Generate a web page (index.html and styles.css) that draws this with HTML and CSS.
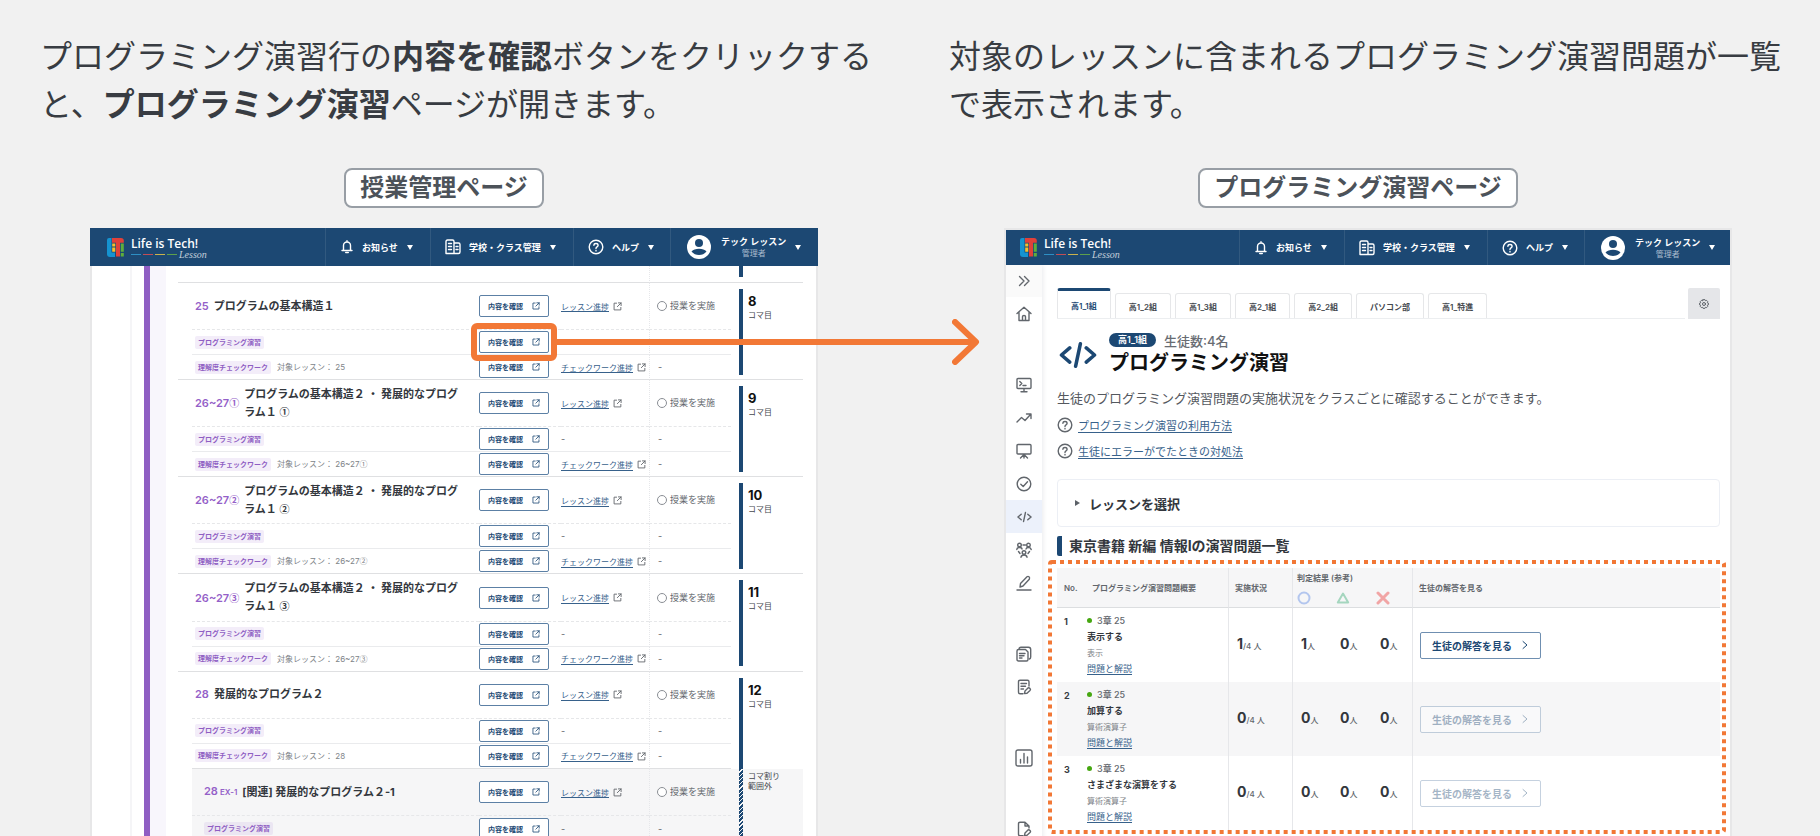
FILE: index.html
```html
<!DOCTYPE html>
<html lang="ja">

<head>
    <meta charset="UTF-8">
    <meta name="viewport" content="width=device-width, initial-scale=1.0">
    <title>プログラミング演習ページの開き方</title>
    <link rel="stylesheet" href="styles.css">
</head>

<body>
    <!-- アイコン定義 -->
    <svg class="defs" aria-hidden="true">
        <symbol id="i-logo" viewBox="0 0 17 19">
            <path d="M2 0H4.500V14.500H8V19H3Q0 19 0 16V2Q0 0 2 0Z" fill="#1593d0" />
            <path d="M5 0H14Q16.800 0 16.800 2.500V4.800H13V18.500H9V4.800H5Z" fill="#e0413a" />
            <path d="M5.200 5.500H8.300V8.500H5.200ZM5.200 9.500H8.300V13.800H5.200Z" fill="#f5c02c" />
            <path d="M13.800 5.500H16.800V13.800H13.800ZM13.800 15H16.800V18.500H13.800Z" fill="#5fae3b" />
        </symbol>
        <symbol id="i-bell" viewBox="0 0 12 14">
            <path d="M2.500 10V5.500a3.500 3.500 0 0 1 7 0V10M1 10.500H11M6 0.800V2" />
            <path d="M4.800 12.500H7.200" stroke-width="1.600" />
        </symbol>
        <symbol id="i-school" viewBox="0 0 16 16">
            <path d="M1 14.500V2.500Q1 1 2.500 1H7.500Q9 1 9 2.500V14.500ZM9 4H13.500Q15 4 15 5.500V13Q15 14.500 13.500 14.500H9M3.500 4.500H6.500M3.500 7.500H6.500M3.500 10.500H6.500M11 7.500H13M11 10.500H13" />
        </symbol>
        <symbol id="i-help" viewBox="0 0 16 16">
            <circle cx="8" cy="8" r="6.800" />
            <path d="M5.900 6.300Q6 4.500 8 4.500T10.100 6.300Q10.100 7.200 9 7.900Q8 8.500 8 9.500M8 11.500V11.900" />
        </symbol>
        <symbol id="i-user" viewBox="0 0 24 24">
            <circle cx="12" cy="12" r="12" fill="#fff" />
            <circle cx="12" cy="8" r="4" fill="#1c4873" />
            <path d="M4.500 16.500Q7 13.800 12 13.800T19.500 16.500Q16.500 20 12 20T4.500 16.500Z" fill="#1c4873" />
        </symbol>
        <symbol id="i-ext" viewBox="0 0 10 10">
            <path d="M4 1.300H1.200V8.800H8.700V6M6 1H9V4M9 1L4.800 5.200" />
        </symbol>
        <symbol id="i-toggle" viewBox="0 0 16 16">
            <path d="M3.500 3.500L8 8L3.500 12.500M8.500 3.500L13 8L8.500 12.500" />
        </symbol>
        <symbol id="i-home" viewBox="0 0 16 16">
            <path d="M1 7.500L8 1.300L15 7.500M3 6V14.500H13V6M6.500 14.500V10.500Q6.500 9.500 8 9.500T9.500 10.500V14.500" />
        </symbol>
        <symbol id="i-console" viewBox="0 0 16 16">
            <path d="M2 1.500H14Q15 1.500 15 2.500V10.500Q15 11.500 14 11.500H2Q1 11.500 1 10.500V2.500Q1 1.500 2 1.500ZM8 11.500V14.500M5 14.700H11M3.800 4.500L5.800 6.500L3.800 8.500M7 8.500H10" />
        </symbol>
        <symbol id="i-trend" viewBox="0 0 16 16">
            <path d="M1 12L5.500 7.500L9 10.500L14.500 4.500M10.500 4H15V8.500" />
        </symbol>
        <symbol id="i-board" viewBox="0 0 16 16">
            <path d="M2 1.500H14Q15 1.500 15 2.500V10Q15 11 14 11H2Q1 11 1 10V2.500Q1 1.500 2 1.500ZM8 11V15M8 11.500L4.500 15M8 11.500L11.500 15" />
        </symbol>
        <symbol id="i-check" viewBox="0 0 16 16">
            <circle cx="8" cy="8" r="6.800" />
            <path d="M4.800 8.200L7.200 10.500L11.500 5.800" />
        </symbol>
        <symbol id="i-code" viewBox="0 0 32 22">
            <path d="M9 5L2 11L9 17M23 5L30 11L23 17M18 1.500L14 20.500" />
        </symbol>
        <symbol id="i-people" viewBox="0 0 16 16">
            <circle cx="3.500" cy="3" r="1.800" />
            <circle cx="12.500" cy="3" r="1.800" />
            <circle cx="8" cy="10.500" r="1.800" />
            <path d="M0.800 7.500Q1 5.500 3.500 5.500T6 7M10 7Q10.200 5.500 12.500 5.500T15.200 7.500M5 15.200Q5.300 13 8 13T11 15.200M7 3H9.500M2.500 9.500L4 11.500M13.500 9.500L12 11.500" />
        </symbol>
        <symbol id="i-pen" viewBox="0 0 16 16">
            <path d="M1 15H15M4 12L4.500 8.500L11 1.800Q12 1 13 1.800T13.300 4.200L7 11Z" />
        </symbol>
        <symbol id="i-copy" viewBox="0 0 16 16">
            <path d="M2.500 3.500H9.500L12 6V13.500Q12 15 10.500 15H2.500Q1 15 1 13.500V5Q1 3.500 2.500 3.500ZM3 3Q3 1.200 5 1.200H12.500Q14.700 1.200 14.700 3.500V11Q14.700 12.500 13.500 13M3.500 7.500H9M3.500 9.800H8M3.500 12H6" />
        </symbol>
        <symbol id="i-note" viewBox="0 0 16 16">
            <path d="M7 14.800H4Q2.500 14.800 2.500 13.300V2.700Q2.500 1.200 4 1.200H11.500Q13 1.200 13 2.700V7M5 4.500H10.500M5 7.300H9.500M5 10H7.500M8.500 14.500L9 12L12 9Q13 8.500 14 9.500T14 11.500L11 14.300Z" />
        </symbol>
        <symbol id="i-file" viewBox="0 0 16 16">
            <path d="M7 14.800H4Q2.500 14.800 2.500 13.300V2.700Q2.500 1.200 4 1.200H9L13 5V7M9 1.200V5H13M8.500 14.500L9 12L12 9Q13 8.500 14 9.500T14 11.500L11 14.300Z" />
        </symbol>
        <symbol id="i-chart" viewBox="0 0 18 18">
            <path d="M3 1H15Q17 1 17 3V15Q17 17 15 17H3Q1 17 1 15V3Q1 1 3 1ZM5.500 10.500V14M9 4.500V14M12.500 8V14" />
        </symbol>
        <symbol id="i-gear" viewBox="0 0 10 10">
            <circle cx="5" cy="5" r="1.500" />
            <path d="M4 0.700H6L6.500 1.700L7.600 1.400L8.700 2.500L8.300 3.600L9.300 4V6L8.300 6.400L8.700 7.500L7.600 8.600L6.500 8.300L6 9.300H4L3.500 8.300L2.400 8.600L1.300 7.500L1.700 6.400L0.700 6V4L1.700 3.600L1.300 2.500L2.400 1.400L3.500 1.700Z" />
        </symbol>
        <symbol id="i-next" viewBox="0 0 8 10">
            <path d="M2 1.500L6 5L2 8.500" />
        </symbol>
    </svg>

    <main class="slide">
        <section class="step">
            <p class="lead">プログラミング演習行の<strong>内容を確認</strong>ボタンをクリックすると、<strong>プログラミング演習</strong>ページが開きます。</p>
            <div class="shot shot-left">
                <h2 class="caption"><span>授業管理ページ</span></h2>
                <div class="window window-lessons">
                    <header class="topbar">
                        <div class="brand">
                            <svg class="brand-mark"><use href="#i-logo" /></svg>
                            <div class="brand-text">
                                <span class="brand-name">Life is Tech!</span>
                                <span class="brand-sub"><i class="b1"></i><i class="b2"></i><i class="b3"></i><i class="b4"></i><em>Lesson</em></span>
                            </div>
                        </div>
                        <a class="nav nav-news" href="#"><svg class="icon bell"><use href="#i-bell" /></svg>お知らせ<b class="caret"></b></a>
                        <a class="nav nav-school" href="#"><svg class="icon"><use href="#i-school" /></svg>学校・クラス管理<b class="caret"></b></a>
                        <a class="nav nav-help" href="#"><svg class="icon"><use href="#i-help" /></svg>ヘルプ<b class="caret"></b></a>
                        <a class="nav nav-user" href="#"><svg class="avatar"><use href="#i-user" /></svg><span class="user">テック レッスン<small>管理者</small></span><b class="caret"></b></a>
                    </header>
                    <div class="lessons">
                        <div class="gutter"></div>
                        <div class="unit-bar"></div>
                        <table class="lesson-table">
                            <colgroup>
                                <col class="c-pad">
                                <col>
                                <col class="c-btn">
                                <col class="c-link">
                                <col class="c-status">
                                <col class="c-period">
                            </colgroup>
                            <tbody class="prev">
                                <tr>
                                    <td class="pad"></td>
                                    <td></td>
                                    <td></td>
                                    <td></td>
                                    <td class="status"></td>
                                    <td class="period"><div class="slot"></div></td>
                                </tr>
                            </tbody>
                            <tbody>
                                <tr class="main">
                                    <td class="pad" rowspan="3"></td>
                                    <td><div class="title"><b>25</b><span>プログラムの基本構造１</span></div></td>
                                    <td><button class="confirm">内容を確認<svg><use href="#i-ext" /></svg></button></td>
                                    <td><a class="progress" href="#">レッスン進捗</a><svg class="ext"><use href="#i-ext" /></svg></td>
                                    <td class="status"><label><input type="radio" name="l25">授業を実施</label></td>
                                    <td class="period" rowspan="3"><div class="slot"><b>8</b>コマ目</div></td>
                                </tr>
                                <tr>
                                    <td><span class="tag">プログラミング演習</span></td>
                                    <td><div class="focus"><button class="confirm">内容を確認<svg><use href="#i-ext" /></svg></button></div></td>
                                    <td></td>
                                    <td class="status"></td>
                                </tr>
                                <tr>
                                    <td><span class="tag">理解度チェックワーク</span><span class="target">対象レッスン： 25</span></td>
                                    <td><button class="confirm">内容を確認<svg><use href="#i-ext" /></svg></button></td>
                                    <td><a class="progress" href="#">チェックワーク進捗</a><svg class="ext"><use href="#i-ext" /></svg></td>
                                    <td class="status">-</td>
                                </tr>
                            </tbody>
                            <tbody>
                                <tr class="main">
                                    <td class="pad" rowspan="3"></td>
                                    <td><div class="title"><b>26~27<i class="circled">①</i></b><span>プログラムの基本構造２ ・ 発展的なプログラム１ <i class="circled">①</i></span></div></td>
                                    <td><button class="confirm">内容を確認<svg><use href="#i-ext" /></svg></button></td>
                                    <td><a class="progress" href="#">レッスン進捗</a><svg class="ext"><use href="#i-ext" /></svg></td>
                                    <td class="status"><label><input type="radio" name="l26a">授業を実施</label></td>
                                    <td class="period" rowspan="3"><div class="slot"><b>9</b>コマ目</div></td>
                                </tr>
                                <tr>
                                    <td><span class="tag">プログラミング演習</span></td>
                                    <td><button class="confirm">内容を確認<svg><use href="#i-ext" /></svg></button></td>
                                    <td>-</td>
                                    <td class="status">-</td>
                                </tr>
                                <tr>
                                    <td><span class="tag">理解度チェックワーク</span><span class="target">対象レッスン： 26~27<i class="circled">①</i></span></td>
                                    <td><button class="confirm">内容を確認<svg><use href="#i-ext" /></svg></button></td>
                                    <td><a class="progress" href="#">チェックワーク進捗</a><svg class="ext"><use href="#i-ext" /></svg></td>
                                    <td class="status">-</td>
                                </tr>
                            </tbody>
                            <tbody>
                                <tr class="main">
                                    <td class="pad" rowspan="3"></td>
                                    <td><div class="title"><b>26~27<i class="circled">②</i></b><span>プログラムの基本構造２ ・ 発展的なプログラム１ <i class="circled">②</i></span></div></td>
                                    <td><button class="confirm">内容を確認<svg><use href="#i-ext" /></svg></button></td>
                                    <td><a class="progress" href="#">レッスン進捗</a><svg class="ext"><use href="#i-ext" /></svg></td>
                                    <td class="status"><label><input type="radio" name="l26b">授業を実施</label></td>
                                    <td class="period" rowspan="3"><div class="slot"><b>10</b>コマ目</div></td>
                                </tr>
                                <tr>
                                    <td><span class="tag">プログラミング演習</span></td>
                                    <td><button class="confirm">内容を確認<svg><use href="#i-ext" /></svg></button></td>
                                    <td>-</td>
                                    <td class="status">-</td>
                                </tr>
                                <tr>
                                    <td><span class="tag">理解度チェックワーク</span><span class="target">対象レッスン： 26~27<i class="circled">②</i></span></td>
                                    <td><button class="confirm">内容を確認<svg><use href="#i-ext" /></svg></button></td>
                                    <td><a class="progress" href="#">チェックワーク進捗</a><svg class="ext"><use href="#i-ext" /></svg></td>
                                    <td class="status">-</td>
                                </tr>
                            </tbody>
                            <tbody>
                                <tr class="main">
                                    <td class="pad" rowspan="3"></td>
                                    <td><div class="title"><b>26~27<i class="circled">③</i></b><span>プログラムの基本構造２ ・ 発展的なプログラム１ <i class="circled">③</i></span></div></td>
                                    <td><button class="confirm">内容を確認<svg><use href="#i-ext" /></svg></button></td>
                                    <td><a class="progress" href="#">レッスン進捗</a><svg class="ext"><use href="#i-ext" /></svg></td>
                                    <td class="status"><label><input type="radio" name="l26c">授業を実施</label></td>
                                    <td class="period" rowspan="3"><div class="slot"><b>11</b>コマ目</div></td>
                                </tr>
                                <tr>
                                    <td><span class="tag">プログラミング演習</span></td>
                                    <td><button class="confirm">内容を確認<svg><use href="#i-ext" /></svg></button></td>
                                    <td>-</td>
                                    <td class="status">-</td>
                                </tr>
                                <tr>
                                    <td><span class="tag">理解度チェックワーク</span><span class="target">対象レッスン： 26~27<i class="circled">③</i></span></td>
                                    <td><button class="confirm">内容を確認<svg><use href="#i-ext" /></svg></button></td>
                                    <td><a class="progress" href="#">チェックワーク進捗</a><svg class="ext"><use href="#i-ext" /></svg></td>
                                    <td class="status">-</td>
                                </tr>
                            </tbody>
                            <tbody class="before-extra">
                                <tr class="main">
                                    <td class="pad" rowspan="3"></td>
                                    <td><div class="title"><b>28</b><span>発展的なプログラム２</span></div></td>
                                    <td><button class="confirm">内容を確認<svg><use href="#i-ext" /></svg></button></td>
                                    <td><a class="progress" href="#">レッスン進捗</a><svg class="ext"><use href="#i-ext" /></svg></td>
                                    <td class="status"><label><input type="radio" name="l28">授業を実施</label></td>
                                    <td class="period" rowspan="3"><div class="slot"><b>12</b>コマ目</div></td>
                                </tr>
                                <tr>
                                    <td><span class="tag">プログラミング演習</span></td>
                                    <td><button class="confirm">内容を確認<svg><use href="#i-ext" /></svg></button></td>
                                    <td>-</td>
                                    <td class="status">-</td>
                                </tr>
                                <tr>
                                    <td><span class="tag">理解度チェックワーク</span><span class="target">対象レッスン： 28</span></td>
                                    <td><button class="confirm">内容を確認<svg><use href="#i-ext" /></svg></button></td>
                                    <td><a class="progress" href="#">チェックワーク進捗</a><svg class="ext"><use href="#i-ext" /></svg></td>
                                    <td class="status">-</td>
                                </tr>
                            </tbody>
                            <tbody class="extra">
                                <tr class="main">
                                    <td class="pad" rowspan="2"></td>
                                    <td><div class="title"><b>28<small>EX-1</small></b><span>[関連] 発展的なプログラム２-1</span></div></td>
                                    <td><button class="confirm">内容を確認<svg><use href="#i-ext" /></svg></button></td>
                                    <td><a class="progress" href="#">レッスン進捗</a><svg class="ext"><use href="#i-ext" /></svg></td>
                                    <td class="status"><label><input type="radio" name="l28x">授業を実施</label></td>
                                    <td class="period" rowspan="2"><div class="slot">コマ割り<br>範囲外</div></td>
                                </tr>
                                <tr>
                                    <td><span class="tag">プログラミング演習</span></td>
                                    <td><button class="confirm">内容を確認<svg><use href="#i-ext" /></svg></button></td>
                                    <td>-</td>
                                    <td class="status">-</td>
                                </tr>
                            </tbody>
                        </table>
                    </div>
                </div>
            </div>
        </section>

        <section class="step">
            <p class="lead">対象のレッスンに含まれるプログラミング演習問題が一覧で表示されます。</p>
            <div class="shot shot-right">
                <h2 class="caption"><span>プログラミング演習ページ</span></h2>
                <div class="window window-practice">
                    <header class="topbar">
                        <div class="brand">
                            <svg class="brand-mark"><use href="#i-logo" /></svg>
                            <div class="brand-text">
                                <span class="brand-name">Life is Tech!</span>
                                <span class="brand-sub"><i class="b1"></i><i class="b2"></i><i class="b3"></i><i class="b4"></i><em>Lesson</em></span>
                            </div>
                        </div>
                        <a class="nav nav-news" href="#"><svg class="icon bell"><use href="#i-bell" /></svg>お知らせ<b class="caret"></b></a>
                        <a class="nav nav-school" href="#"><svg class="icon"><use href="#i-school" /></svg>学校・クラス管理<b class="caret"></b></a>
                        <a class="nav nav-help" href="#"><svg class="icon"><use href="#i-help" /></svg>ヘルプ<b class="caret"></b></a>
                        <a class="nav nav-user" href="#"><svg class="avatar"><use href="#i-user" /></svg><span class="user">テック レッスン<small>管理者</small></span><b class="caret"></b></a>
                    </header>
                    <div class="practice">
                        <nav class="side">
                            <button class="toggle" aria-label="メニューを開く"><svg><use href="#i-toggle" /></svg></button>
                            <a href="#" aria-label="ホーム"><svg><use href="#i-home" /></svg></a>
                            <a href="#" class="gap" aria-label="教材"><svg><use href="#i-console" /></svg></a>
                            <a href="#" aria-label="進捗"><svg><use href="#i-trend" /></svg></a>
                            <a href="#" aria-label="授業"><svg><use href="#i-board" /></svg></a>
                            <a href="#" aria-label="チェックワーク"><svg><use href="#i-check" /></svg></a>
                            <a href="#" class="active" aria-label="プログラミング演習"><svg><use href="#i-code" /></svg></a>
                            <a href="#" aria-label="グループ"><svg><use href="#i-people" /></svg></a>
                            <a href="#" aria-label="作品"><svg><use href="#i-pen" /></svg></a>
                            <a href="#" class="gap" aria-label="資料"><svg><use href="#i-copy" /></svg></a>
                            <a href="#" aria-label="テスト"><svg><use href="#i-note" /></svg></a>
                            <a href="#" class="gap" aria-label="分析"><svg class="large"><use href="#i-chart" /></svg></a>
                            <a href="#" class="gap" aria-label="ファイル"><svg><use href="#i-file" /></svg></a>
                        </nav>
                        <div class="content">
                            <div class="tabs">
                                <div class="tab-list">
                                    <button class="tab current">高1_1組</button>
                                    <button class="tab">高1_2組</button>
                                    <button class="tab">高1_3組</button>
                                    <button class="tab">高2_1組</button>
                                    <button class="tab">高2_2組</button>
                                    <button class="tab">パソコン部</button>
                                    <button class="tab">高1_特進</button>
                                </div>
                                <button class="settings" aria-label="設定"><svg><use href="#i-gear" /></svg></button>
                            </div>
                            <div class="page-head">
                                <svg class="page-icon"><use href="#i-code" /></svg>
                                <div>
                                    <div class="class-info"><span class="pill">高1_1組</span>生徒数:4名</div>
                                    <h1>プログラミング演習</h1>
                                </div>
                            </div>
                            <p class="desc">生徒のプログラミング演習問題の実施状況をクラスごとに確認することができます。</p>
                            <ul class="help-links">
                                <li><svg><use href="#i-help" /></svg><a href="#">プログラミング演習の利用方法</a></li>
                                <li><svg><use href="#i-help" /></svg><a href="#">生徒にエラーがでたときの対処法</a></li>
                            </ul>
                            <details class="picker">
                                <summary>レッスンを選択</summary>
                            </details>
                            <h2 class="list-title">東京書籍 新編 情報Iの演習問題一覧</h2>
                            <div class="result">
                                <svg class="result-frame"><rect /></svg>
                                <table class="result-table">
                                    <colgroup>
                                        <col class="r-no">
                                        <col class="r-name">
                                        <col class="r-state">
                                        <col class="r-mark">
                                        <col class="r-mark">
                                        <col class="r-mark">
                                        <col>
                                    </colgroup>
                                    <thead>
                                        <tr>
                                            <th rowspan="2" class="no">No.</th>
                                            <th rowspan="2" class="name">プログラミング演習問題概要</th>
                                            <th rowspan="2" class="line">実施状況</th>
                                            <th colspan="3" class="line judge">判定結果 (参考)</th>
                                            <th rowspan="2" class="line answer">生徒の解答を見る</th>
                                        </tr>
                                        <tr>
                                            <th class="line mark"><svg viewBox="0 0 14 14"><circle cx="7" cy="7" r="5.500" stroke="#b3c6ee" stroke-width="2" /></svg></th>
                                            <th class="mark"><svg viewBox="0 0 14 14"><path d="M7 2.500L12.200 11.500H1.800Z" stroke="#a5d6bf" stroke-width="2" /></svg></th>
                                            <th class="mark"><svg viewBox="0 0 14 14"><path d="M2 2L12 12M12 2L2 12" stroke="#f1a5a5" stroke-width="3" /></svg></th>
                                        </tr>
                                    </thead>
                                    <tbody>
                                        <tr>
                                            <td class="no">1</td>
                                            <td class="name">
                                                <span class="chapter">3章 25</span>
                                                <b>表示する</b>
                                                <small>表示</small>
                                                <a href="#">問題と解説</a>
                                            </td>
                                            <td class="line count"><b>1</b>/4 人</td>
                                            <td class="line count"><b>1</b>人</td>
                                            <td class="count"><b>0</b>人</td>
                                            <td class="count"><b>0</b>人</td>
                                            <td class="line answer"><button>生徒の解答を見る<svg><use href="#i-next" /></svg></button></td>
                                        </tr>
                                        <tr>
                                            <td class="no">2</td>
                                            <td class="name">
                                                <span class="chapter">3章 25</span>
                                                <b>加算する</b>
                                                <small>算術演算子</small>
                                                <a href="#">問題と解説</a>
                                            </td>
                                            <td class="line count"><b>0</b>/4 人</td>
                                            <td class="line count"><b>0</b>人</td>
                                            <td class="count"><b>0</b>人</td>
                                            <td class="count"><b>0</b>人</td>
                                            <td class="line answer"><button disabled>生徒の解答を見る<svg><use href="#i-next" /></svg></button></td>
                                        </tr>
                                        <tr>
                                            <td class="no">3</td>
                                            <td class="name">
                                                <span class="chapter">3章 25</span>
                                                <b>さまざまな演算をする</b>
                                                <small>算術演算子</small>
                                                <a href="#">問題と解説</a>
                                            </td>
                                            <td class="line count"><b>0</b>/4 人</td>
                                            <td class="line count"><b>0</b>人</td>
                                            <td class="count"><b>0</b>人</td>
                                            <td class="count"><b>0</b>人</td>
                                            <td class="line answer"><button disabled>生徒の解答を見る<svg><use href="#i-next" /></svg></button></td>
                                        </tr>
                                    </tbody>
                                </table>
                            </div>
                        </div>
                    </div>
                </div>
            </div>
        </section>

        <!-- 左の画面から右の画面への矢印 -->
        <div class="arrow"><svg viewBox="0 0 28 46"><path d="M3 3L24 23L3 43" /></svg></div>
    </main>
</body>

</html>
```

FILE: styles.css
```css
*,
*::before,
*::after {
    box-sizing: border-box;
}

body {
    margin: 0;
    background: #f1f1f1;
    color: #383c42;
    font-family: Inter, "Noto Sans CJK JP", sans-serif;
}

h1,
h2,
p,
ul {
    margin: 0;
    padding: 0;
}

button {
    font-family: inherit;
    background: #fff;
    border: none;
    padding: 0;
}

svg {
    flex: none;
    fill: none;
    stroke: currentColor;
    stroke-linecap: round;
    stroke-linejoin: round;
}

.defs {
    display: none;
}

/* 全体 */
.slide {
    position: relative;
    display: grid;
    grid-template-columns: 1fr 1fr;
    column-gap: 76px;
    height: 100vh;
    padding: 30px 38px 0 40px;
    overflow: hidden;
}

.lead {
    font-family: "Noto Sans CJK JP", sans-serif;
    font-size: 32px;
    line-height: 48px;
}

.shot-left {
    padding: 0 55px 0 50px;
}

.shot-right {
    padding: 0 50px 0 55px;
}

.caption {
    display: flex;
    justify-content: center;
    margin: 42px 20px 20px 0;
}

.caption span {
    height: 40px;
    padding: 0 14px;
    border: 2px solid #989ea5;
    border-radius: 8px;
    background: #fff;
    color: #4c5259;
    font-size: 24px;
    line-height: 36px;
}

.window {
    background: #fff;
}

.window-practice {
    border: 2px solid #e7e7e8;
}

/* ヘッダー */
.topbar {
    display: flex;
    height: 38px;
    background: #1c4873;
    color: #fff;
}

.window-practice .topbar {
    height: 35px;
}

.brand {
    flex: 1;
    display: flex;
    align-items: center;
    gap: 7px;
    padding-left: 17px;
}

.window-practice .brand {
    padding-left: 14px;
}

.brand-mark {
    width: 17px;
    height: 19px;
    stroke: none;
}

.brand-text {
    display: flex;
    flex-direction: column;
}

.brand-name {
    font-family: "Open Sans", sans-serif;
    font-size: 12px;
    font-weight: 600;
    line-height: 14px;
}

.brand-sub {
    display: flex;
    align-items: center;
    gap: 2px;
    height: 7px;
}

.brand-sub i {
    width: 10px;
    height: 1px;
}

.b1 { background: #2d8fc4; }
.b2 { background: #c34d55; }
.b3 { background: #c9b24c; }
.b4 { background: #5da04c; }

.brand-sub em {
    font: italic 10px/7px "Liberation Serif", serif;
    color: #c3cfdb;
}

.nav {
    display: flex;
    align-items: center;
    padding-left: 14px;
    border-left: 1px solid #31597f;
    color: #fff;
    font-size: 9px;
    font-weight: 600;
    text-decoration: none;
    white-space: nowrap;
}

.nav .icon {
    width: 16px;
    height: 16px;
    margin-right: 8px;
    stroke-width: 1.4;
}

.nav .bell {
    width: 12px;
    height: 14px;
    margin: 0 9px 0 1px;
}

.nav-news { width: 105px; }
.nav-school { width: 143px; }
.nav-help { width: 97px; }

.nav-user {
    width: 148px;
    padding-left: 16px;
}

.window-practice .nav-user {
    width: 146px;
}

.avatar {
    width: 24px;
    height: 24px;
    margin-right: 10px;
    stroke: none;
}

.user {
    line-height: 12px;
    text-align: center;
}

.user small {
    display: block;
    color: #a9bbcd;
    font-size: 8px;
    font-weight: 400;
    line-height: 10px;
}

.caret {
    margin-left: 9px;
    border: 3px solid transparent;
    border-top: 5px solid #fff;
    border-bottom: 0;
}

/* 授業管理 */
.lessons {
    display: flex;
    border: 0 solid #e7e7e8;
    border-width: 0 2px;
}

.gutter {
    width: 52px;
    border-right: 12px solid #fff;
    box-shadow: inset -2px 0 #f5f5f7;
}

.unit-bar {
    width: 34px;
    border-left: 6px solid #8f5ec3;
    background: linear-gradient(to right, #f8f6fc 16px, #fff 16px);
}

.lesson-table {
    flex: 1;
    margin-right: 13px;
    border-spacing: 0;
    table-layout: fixed;
    font-size: 9px;
    line-height: 12px;
    color: #62666c;
}

.c-pad { width: 14px; }
.c-btn { width: 82px; }
.c-link { width: 88px; }
.c-status { width: 82px; }
.c-period { width: 72px; }

.lesson-table td {
    height: 25px;
    padding: 0;
    border-bottom: 1px solid #eaebed;
    white-space: nowrap;
}

.lesson-table .main td {
    height: 47px;
    border-bottom: 1px dashed #e6e7e9;
}

.lesson-table .prev td {
    height: 17px;
    border-bottom: 1px solid #d9dadc;
}

.lesson-table tr:last-child td,
.lesson-table .main .pad,
.lesson-table .main .period {
    border-bottom: 1px solid #dfe0e2;
}

.lesson-table .status {
    padding-left: 8px;
    border-left: 1px dotted #e6e7ea;
}

.status label {
    display: flex;
    align-items: center;
    gap: 3px;
    margin-left: -5px;
    padding-left: 4px;
}

.status input {
    appearance: none;
    width: 10px;
    height: 10px;
    margin: 0;
    border: 1px solid #8a8e94;
    border-radius: 50%;
    background: #fff;
}

.title {
    display: flex;
    align-items: center;
    gap: 5px;
    padding: 0 10px 0 3px;
    color: #33373d;
    font-size: 11px;
    font-weight: 700;
    line-height: 17px;
    white-space: normal;
}

.title b {
    color: #9460c8;
    font-weight: 600;
    white-space: nowrap;
}

.title small {
    margin-left: 2px;
    font-size: 8px;
}

.circled {
    font-family: "Noto Sans CJK JP", sans-serif;
    font-size: 10px;
    font-style: normal;
}

.target .circled {
    font-size: 8px;
}

.tag {
    display: inline-block;
    height: 13px;
    margin-left: 3px;
    padding: 0 3px;
    border-radius: 2px;
    background: #f3edf9;
    color: #8f5ec3;
    font-size: 7px;
    font-weight: 600;
    line-height: 13px;
    vertical-align: middle;
}

.target {
    margin-left: 6px;
    color: #808489;
    font-size: 8px;
    vertical-align: middle;
}

.confirm {
    display: flex;
    align-items: center;
    justify-content: center;
    gap: 9px;
    width: 70px;
    height: 22px;
    border: 1px solid #5c80a5;
    border-radius: 2px;
    color: #1c4873;
    font-size: 7px;
    font-weight: 700;
}

.confirm svg {
    width: 8px;
    height: 8px;
}

.progress {
    color: #37618b;
    font-size: 8px;
    text-underline-offset: 2px;
    vertical-align: middle;
}

.ext {
    width: 9px;
    height: 9px;
    margin-left: 4px;
    vertical-align: middle;
}

.lesson-table .period {
    padding-left: 8px;
    vertical-align: top;
}

.slot {
    height: 86px;
    margin-top: 6px;
    padding: 4px 0 0 5px;
    border-left: 4px solid #1c4873;
    color: #44484e;
    font-size: 8px;
    line-height: 12px;
}

.slot b {
    display: block;
    color: #111;
    font-size: 13px;
    line-height: 16px;
}

.prev .slot {
    height: 11px;
    margin: 0 0 5px;
    padding: 0;
}

.before-extra .slot {
    height: 91px;
}

.lesson-table .before-extra .main .period {
    border-bottom: none;
}

.lesson-table .before-extra .main .pad {
    border-bottom-color: #fff;
}

.extra td {
    background: #f6f6f7;
}

.extra .pad {
    background: #fff;
}

.extra .title {
    padding-left: 12px;
}

.extra .tag {
    margin-left: 12px;
    background: #ebe6f2;
}

.extra .slot {
    height: 72px;
    margin-top: 0;
    padding: 2px 0 0 9px;
    border-left: none;
    background: repeating-linear-gradient(135deg, #1c4873 0 2px, #f6f6f7 2px 3px) left / 4px 100% no-repeat;
    line-height: 10px;
}

/* クリックするボタンの強調 */
.focus {
    position: relative;
}

.focus::after {
    content: "";
    position: absolute;
    z-index: 1;
    top: -8px;
    left: -8px;
    width: 86px;
    height: 38px;
    border: 6px solid #f27836;
    border-radius: 6px;
}

.arrow {
    position: absolute;
    top: 319px;
    left: 556px;
    width: 424px;
    height: 46px;
    display: flex;
    align-items: center;
    justify-content: flex-end;
    background: linear-gradient(#f27836, #f27836) left center / calc(100% - 4px) 6px no-repeat;
    color: #f27836;
}

.arrow svg {
    width: 28px;
    height: 46px;
    stroke-width: 6;
}

/* プログラミング演習 */
.practice {
    display: flex;
}

.side {
    display: flex;
    flex-direction: column;
    width: 36px;
    color: #61666c;
    box-shadow: 1px 0 5px #e9eaed;
    clip-path: inset(0 -8px 0 0);
}

.side a,
.toggle {
    display: flex;
    align-items: center;
    justify-content: center;
    height: 33px;
    color: inherit;
}

.side .toggle {
    height: 32px;
    background: #fafafa;
}

.side .gap {
    margin-top: 38px;
}

.side .active {
    background: #ecf1fb;
}

.side svg {
    width: 16px;
    height: 16px;
    stroke-width: 1.4;
}

.side .active svg {
    width: 15px;
    stroke-width: 3;
}

.side .large {
    width: 18px;
    height: 18px;
}

.content {
    flex: 1;
    min-width: 0;
    padding: 23px 10px 0 15px;
}

.tabs {
    display: flex;
    gap: 3px;
}

.tab-list {
    flex: 1;
    display: flex;
    align-items: flex-end;
    gap: 4px;
    border-bottom: 1px solid #eceef0;
}

.tab {
    height: 25px;
    padding: 0 13px;
    border: 1px solid #e6e7e9;
    border-bottom: none;
    border-radius: 3px 3px 0 0;
    color: #44484e;
    font-size: 8px;
    font-weight: 600;
}

.current {
    height: 30px;
    padding-top: 2px;
    border-top: 3px solid #1c4873;
    color: #1c4873;
}

.settings {
    width: 32px;
    height: 31px;
    border-radius: 2px 2px 0 0;
    background: #e5e6e9;
    color: #5c6168;
}

.settings svg {
    width: 10px;
    height: 10px;
    stroke-width: 1;
}

.page-head {
    display: flex;
    align-items: center;
    gap: 12px;
    margin-top: 13px;
    padding-left: 2px;
}

.page-icon {
    width: 38px;
    height: 26px;
    color: #1c4873;
    stroke-width: 3;
}

.class-info {
    display: flex;
    align-items: center;
    gap: 8px;
    height: 16px;
    color: #686c72;
    font-size: 13px;
    font-weight: 500;
}

.pill {
    height: 14px;
    padding: 0 9px;
    border-radius: 7px;
    background: #1c4873;
    color: #fff;
    font-size: 9px;
    font-weight: 600;
    line-height: 14px;
}

.page-head h1 {
    color: #111;
    font-size: 20px;
    line-height: 30px;
}

.desc {
    margin-top: 10px;
    color: #54585e;
    font-size: 13px;
    line-height: 20px;
}

.help-links {
    margin-top: 4px;
    list-style: none;
}

.help-links li {
    display: flex;
    align-items: center;
    gap: 5px;
    height: 26px;
    font-size: 11px;
    color: #61666c;
}

.help-links svg {
    width: 16px;
    height: 16px;
    stroke-width: 1.4;
}

.help-links a,
.name a {
    color: #37618b;
    text-underline-offset: 2px;
}

.picker {
    margin-top: 15px;
    border: 1px solid #eceff5;
    border-radius: 4px;
    color: #33373d;
    font-size: 13px;
    font-weight: 600;
}

.picker summary {
    display: flex;
    align-items: center;
    gap: 9px;
    height: 46px;
    padding-left: 17px;
}

.picker summary::before {
    content: "";
    border: 3px solid transparent;
    border-left: 5px solid #5c6168;
    border-right: 0;
}

.list-title {
    margin-top: 9px;
    padding-left: 7px;
    border-left: 5px solid #1c4873;
    border-radius: 2px;
    color: #33373d;
    font-size: 14px;
    line-height: 20px;
}

.result {
    position: relative;
    margin-top: 12px;
}

.result-frame {
    position: absolute;
    top: -8px;
    left: -9px;
    width: calc(100% + 15px);
    height: calc(100% + 12px);
    color: #f27836;
}

.result-frame rect {
    x: 2px;
    y: 2px;
    width: calc(100% - 4px);
    height: calc(100% - 4px);
    rx: 2px;
    stroke-width: 4;
    stroke-dasharray: 4 4;
    stroke-linecap: butt;
}

.result-table {
    width: 100%;
    border-spacing: 0;
    table-layout: fixed;
    font-size: 8px;
    line-height: 12px;
    color: #62666c;
}

.r-no { width: 30px; }
.r-name { width: 141px; }
.r-state { width: 64px; }
.r-mark { width: 40px; }

.result-table th {
    height: 20px;
    padding: 0 0 0 6px;
    background: #f6f6f7;
    font-weight: 600;
    text-align: left;
}

.result-table thead th[rowspan],
.result-table .mark {
    border-bottom: 1px solid #dcdee0;
}

.result-table .line {
    border-left: 1px solid #e6e7ea;
}

.result-table .judge,
.result-table .mark {
    padding-left: 4px;
}

.mark svg {
    display: block;
    width: 14px;
    height: 14px;
}

.result-table th.name {
    padding-left: 5px;
}

.result-table td {
    height: 74px;
    padding: 0;
}

.result-table tbody tr:nth-child(even) {
    background: #f6f6f7;
}

.result-table .no {
    padding-left: 7px;
}

.result-table td.no {
    padding-top: 8px;
    color: #383c42;
    font-size: 9px;
    font-weight: 700;
    vertical-align: top;
}

.name > * {
    display: block;
    width: max-content;
    font-size: 9px;
    line-height: 16px;
}

.name b {
    color: #33373d;
}

.name small {
    color: #808489;
    font-size: 8px;
}

.chapter {
    font-weight: 500;
}

.chapter::before {
    content: "";
    display: inline-block;
    width: 5px;
    height: 5px;
    margin: 0 5px 1px 0;
    border-radius: 50%;
    background: #46a711;
}

.result-table td.count {
    padding: 0 0 0 8px;
    font-weight: 500;
}

.count b {
    color: #33373d;
    font-size: 14px;
}

.result-table td.answer {
    padding: 0 0 0 7px;
}

.answer button {
    display: flex;
    align-items: center;
    gap: 9px;
    height: 27px;
    padding: 0 11px;
    border: 1px solid #6f8fb1;
    border-radius: 2px;
    color: #1c4873;
    font-size: 10px;
    font-weight: 700;
}

.answer svg {
    width: 8px;
    height: 10px;
}

.answer button:disabled {
    opacity: 0.4;
}
```
